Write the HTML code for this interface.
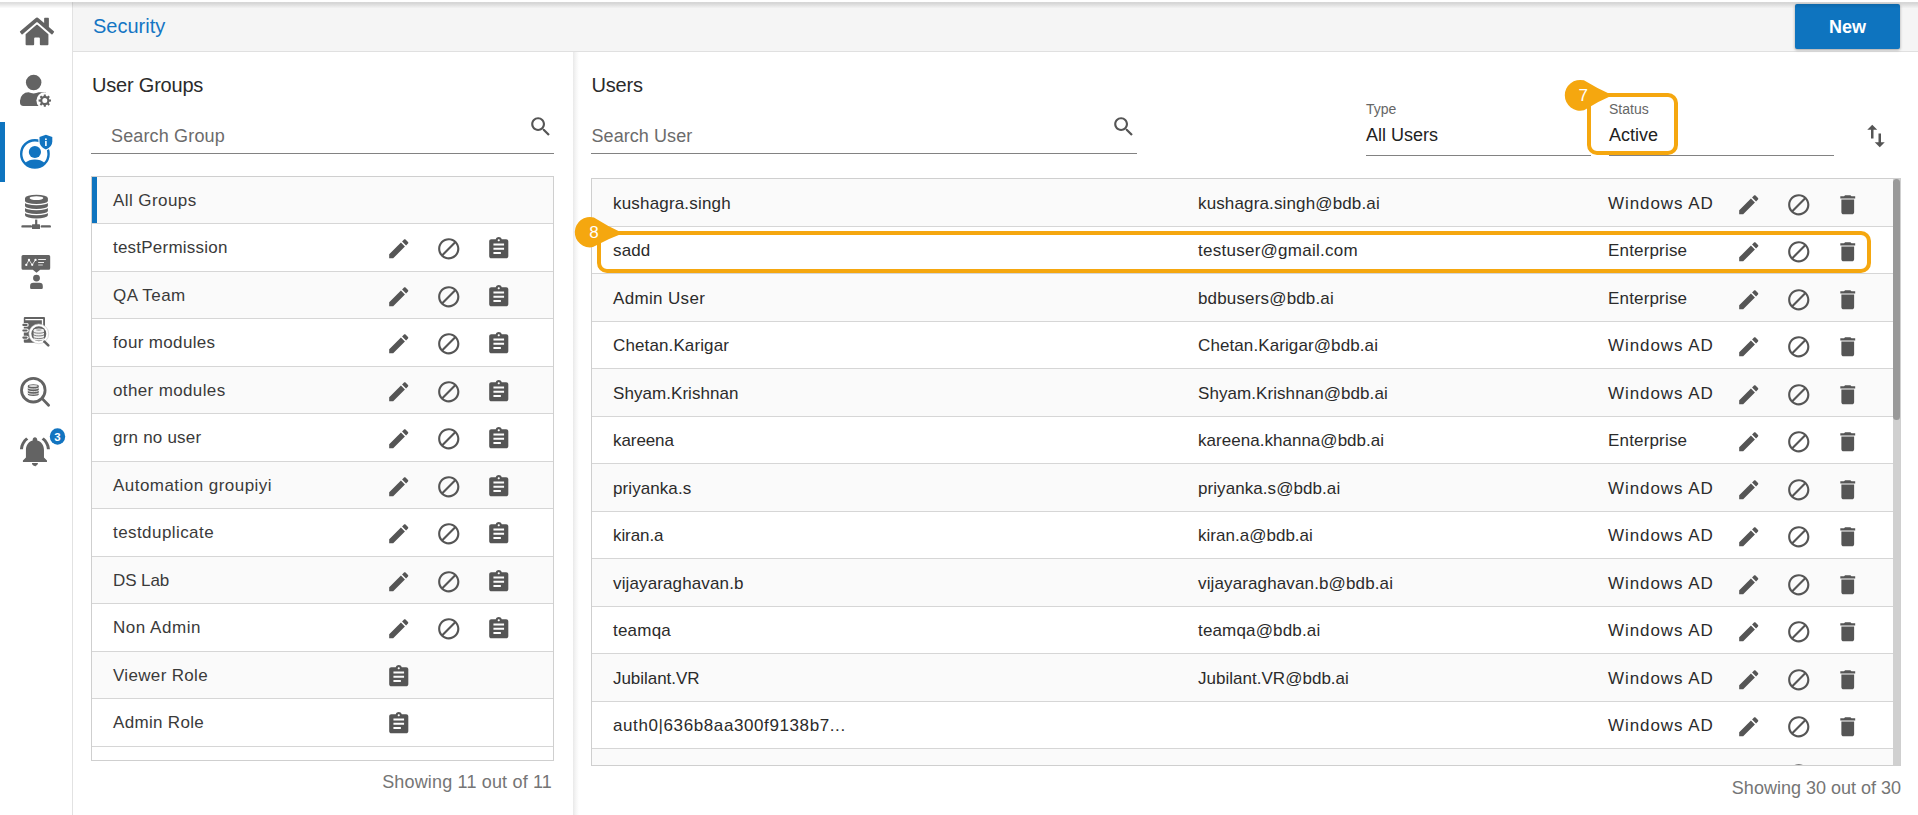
<!DOCTYPE html>
<html lang="en"><head><meta charset="utf-8"><title>Security</title>
<style>
*{box-sizing:border-box}
html,body{margin:0;padding:0;width:1918px;height:815px;overflow:hidden;background:#fff;font-family:"Liberation Sans",sans-serif;color:#212121}
.abs{position:absolute}
#side{position:absolute;left:0;top:0;width:73px;height:815px;background:#fff;border-right:1px solid #e2e2e2}
#bar{position:absolute;left:0;top:122px;width:5px;height:60px;background:#0e74bf}
#head{position:absolute;left:73px;top:0;width:1845px;height:52px;background:#f5f5f5;border-bottom:1px solid #e0e0e0}
#topsh{position:absolute;left:0;top:0;width:1918px;height:9px;background:linear-gradient(#fff 0,#fff 1.6px,rgba(0,0,0,.14) 2.6px,rgba(0,0,0,0) 8.5px)}
#title{position:absolute;left:93px;top:12px;font-size:20px;color:#1475c4;line-height:28px}
#new{position:absolute;left:1795px;top:4px;width:105px;height:45px;background:#0e74bf;border-radius:2px;color:#fff;font-size:18px;font-weight:bold;text-align:center;line-height:47.5px;box-shadow:0 1px 3px rgba(0,0,0,.35)}
#lpanel{position:absolute;left:573px;top:52px;width:6px;height:763px;background:linear-gradient(90deg,#e9e9e9,#f6f6f6 50%,#fff)}
.h2{position:absolute;font-size:20px;line-height:28px;color:#2b2b2b;letter-spacing:-.2px}
.ph{position:absolute;font-size:18px;line-height:24px;color:#6b6b6b}
.ul{position:absolute;height:1px;background:#828282}
.ic{width:25.5px;height:25.5px;fill:#555;display:block}
.list{position:absolute;border:1px solid #cfcfcf;overflow:hidden;background:#fff}
.row{position:absolute;left:0;right:0;border-bottom:1px solid #d6d6d6;font-size:17px;white-space:nowrap}
.row.odd{background:#fafafa}
.row.sel{box-shadow:inset 5px 0 0 #0e74bf}
.row .nm{position:absolute;left:21px;top:var(--dy,0px)}

.gi{position:absolute}
.foot{position:absolute;font-size:18px;color:#757575;line-height:24px;text-align:right}
.em{position:absolute;left:606px;top:var(--dy,0px)}
.ty{position:absolute;left:1016px;top:var(--dy,0px)}
.lbl{position:absolute;font-size:14px;color:#666;line-height:18px}
.val{position:absolute;font-size:18px;color:#222;line-height:24px}
.sw .ic{width:30px;height:30px}
.hl{position:absolute;border:4px solid #f5a70f;border-radius:10px}
</style></head><body>
<div id="head"></div>
<div id="title">Security</div>
<div id="new">New</div>
<div id="lpanel"></div>
<div id="side"><div id="bar"></div><svg id="sideic" width="73" height="815" viewBox="0 0 73 815" style="position:absolute;left:0;top:0"><g transform="translate(19.9,15.73) scale(0.0594,0.0616)" fill="#636363"><path d="M280.37 148.26L96 300.11V464a16 16 0 0 0 16 16l112.06-.29a16 16 0 0 0 15.92-16V368a16 16 0 0 1 16-16h64a16 16 0 0 1 16 16v95.64a16 16 0 0 0 16 16.050L464 480a16 16 0 0 0 16-16V300L295.67 148.26a12.190 12.190 0 0 0-15.300 0zM571.600 251.470L488 182.560V44.050a12 12 0 0 0-12-12h-56a12 12 0 0 0-12 12v72.610L318.470 43a48 48 0 0 0-61 0L4.340 251.470a12 12 0 0 0-1.600 16.900l25.500 31A12 12 0 0 0 45.150 301l235.220-193.740a12.190 12.190 0 0 1 15.300 0L530.900 301a12 12 0 0 0 16.900-1.600l25.500-31a12 12 0 0 0-1.700-16.930z"/></g><circle cx="33.65" cy="82.55" r="7.75" fill="#636363"/><path fill="#636363" d="M20,102.6 V100.8 A8.5,8.5 0 0 1 28.5,92.3 Q33.6,94.6 38.8,92.3 H46 V106 H23.4 A3.4,3.4 0 0 1 20,102.6Z"/><circle cx="44.8" cy="100.6" r="8.4" fill="#fff"/><path fill="#636363" fill-rule="evenodd" d="M49.37,99.50 L51.02,99.61 L51.02,101.59 L49.37,101.70 L48.81,103.06 L49.90,104.30 L48.50,105.70 L47.26,104.61 L45.90,105.17 L45.79,106.82 L43.81,106.82 L43.70,105.17 L42.34,104.61 L41.10,105.70 L39.70,104.30 L40.79,103.06 L40.23,101.70 L38.58,101.59 L38.58,99.61 L40.23,99.50 L40.79,98.14 L39.70,96.90 L41.10,95.50 L42.34,96.59 L43.70,96.03 L43.81,94.38 L45.79,94.38 L45.90,96.03 L47.26,96.59 L48.50,95.50 L49.90,96.90 L48.81,98.14Z M42.30,100.60 a2.5,2.5 0 1 0 5.0,0 a2.5,2.5 0 1 0 -5.0,0Z"/><clipPath id="cpS"><circle cx="34.9" cy="153.9" r="13.7"/></clipPath><ellipse cx="34.9" cy="171.2" rx="14" ry="11.6" fill="#1274c0" clip-path="url(#cpS)"/><circle cx="34.9" cy="153.9" r="13.7" fill="none" stroke="#1274c0" stroke-width="2.4"/><circle cx="34.9" cy="152" r="6.1" fill="#1274c0"/><path d="M45.9,134.7 L52.3,137.1 V141.5 Q52.3,146.6 45.9,149.6 Q39.5,146.6 39.5,141.5 V137.1Z" fill="#1274c0" stroke="#fff" stroke-width="2.2" paint-order="stroke"/><circle cx="45.9" cy="139.2" r="0.95" fill="#fff"/><rect x="45.1" y="141" width="1.6" height="5" fill="#fff"/><path fill="#636363" d="M25.00,198.20 A11.45,3.4 0 0 1 47.90,198.20 V215.20 A11.45,3.4 0 0 1 25.00,215.20Z"/><ellipse cx="36.45" cy="198.10" rx="6.87" ry="1.90" fill="#fff"/><path fill="none" stroke="#fff" stroke-width="1.3" d="M24.50,201.20 A11.95,3.4 0 0 0 48.40,201.20"/><path fill="none" stroke="#fff" stroke-width="1.3" d="M24.50,206.20 A11.95,3.4 0 0 0 48.40,206.20"/><path fill="none" stroke="#fff" stroke-width="1.3" d="M24.50,211.20 A11.95,3.4 0 0 0 48.40,211.20"/><rect x="35.1" y="219.6" width="2.2" height="6" fill="#636363"/><rect x="32" y="224.3" width="8" height="4.7" rx="0.6" fill="#636363"/><path d="M22.5,226.4 H30.9 M41.8,226.4 H49.8" stroke="#636363" stroke-width="2.4" stroke-linecap="round"/><path fill="#636363" d="M23,254.9 H48.700 A1.5,1.5 0 0 1 50.2,256.4 V268.3 A1.5,1.5 0 0 1 48.700,269.8 H40.200 L36.500,272.700 L32.800,269.8 H23 A1.5,1.5 0 0 1 21.500,268.3 V256.4 A1.5,1.5 0 0 1 23,254.9Z"/><path d="M26.300,264.9 L29,260 L32.200,264.8 L35.500,259.9" stroke="#fff" stroke-width="0.8" fill="none"/><circle cx="26.3" cy="264.9" r="1.15" fill="#fff"/><circle cx="29" cy="260" r="1.15" fill="#fff"/><circle cx="32.2" cy="264.8" r="1.15" fill="#fff"/><circle cx="35.5" cy="259.9" r="1.15" fill="#fff"/><path d="M38.200,259.500 H45.900 M38.200,262.500 H44" stroke="#fff" stroke-width="0.9"/><path d="M38.200,265 H42.800" stroke="#bbb" stroke-width="1.3"/><circle cx="36.5" cy="278.1" r="3.45" fill="#636363"/><path fill="#636363" d="M30.100,287.700 V285.900 A3.200,3.200 0 0 1 33.300,282.700 H39.600 A3.200,3.200 0 0 1 42.800,285.900 V287.700 A1.200,1.200 0 0 1 41.600,288.900 H31.300 A1.200,1.200 0 0 1 30.100,287.700Z"/><rect x="23.8" y="317" width="21.2" height="25.700" rx="1" fill="#636363"/><path d="M25.300,319.700 H42.500 V326" stroke="#fff" stroke-width="1.3" fill="none"/><rect x="21.400" y="323.0" width="7.300" height="3.800" rx="1.9" fill="#fff"/><rect x="22.300" y="323.84999999999997" width="5.300" height="2.100" rx="1.05" fill="#636363"/><rect x="21.400" y="328.6" width="7.300" height="3.800" rx="1.9" fill="#fff"/><rect x="22.300" y="329.45" width="5.300" height="2.100" rx="1.05" fill="#636363"/><rect x="21.400" y="335.70000000000005" width="7.300" height="3.800" rx="1.9" fill="#fff"/><rect x="22.300" y="336.55" width="5.300" height="2.100" rx="1.05" fill="#636363"/><circle cx="38.8" cy="333.8" r="9.9" fill="#fff" stroke="#c4c4c4" stroke-width="0.6"/><path d="M44.400,341.600 L48.300,345.400" stroke="#636363" stroke-width="2.6" stroke-linecap="round"/><circle cx="38.8" cy="333.8" r="7.5" fill="#636363"/><path fill="#f0f0f0" d="M33.60,330.20 A5.2,1.6 0 0 1 44.00,330.20 V339.00 A5.2,1.6 0 0 1 33.60,339.00Z"/><path fill="none" stroke="#636363" stroke-width="0.8" d="M33.10,331.60 A5.7,1.6 0 0 0 44.50,331.60"/><path fill="none" stroke="#636363" stroke-width="0.8" d="M33.10,334.30 A5.7,1.6 0 0 0 44.50,334.30"/><path fill="none" stroke="#636363" stroke-width="0.8" d="M33.10,337.00 A5.7,1.6 0 0 0 44.50,337.00"/><ellipse cx="38.8" cy="330.1" rx="3" ry="0.8" fill="#aaa"/><circle cx="33.3" cy="390.2" r="11.800" fill="none" stroke="#636363" stroke-width="2.800"/><path d="M42.200,398.600 L48.600,405.200" stroke="#636363" stroke-width="2.800" stroke-linecap="round"/><path fill="#636363" d="M27.80,386.00 A5.5,1.7 0 0 1 38.80,386.00 V394.30 A5.5,1.7 0 0 1 27.80,394.30Z"/><path fill="none" stroke="#fff" stroke-width="0.8" d="M27.30,387.30 A6.0,1.7 0 0 0 39.30,387.30"/><path fill="none" stroke="#fff" stroke-width="0.8" d="M27.30,389.90 A6.0,1.7 0 0 0 39.30,389.90"/><path fill="none" stroke="#fff" stroke-width="0.8" d="M27.30,392.50 A6.0,1.7 0 0 0 39.30,392.50"/><ellipse cx="33.3" cy="386" rx="4.300" ry="1.100" fill="#d8d8d8"/><g transform="translate(16.9,433.4) scale(1.504)" fill="#636363"><path d="M7.580 4.080L6.150 2.650C3.750 4.480 2.170 7.300 2.030 10.500h2c.15-2.650 1.510-4.970 3.550-6.420zm12.390 6.420h2c-.15-3.200-1.730-6.020-4.120-7.850l-1.420 1.430c2.020 1.450 3.390 3.770 3.540 6.420zM18 11c0-3.070-1.640-5.640-4.500-6.320V4c0-.83-.67-1.500-1.500-1.500s-1.500.67-1.500 1.500v.68C7.630 5.360 6 7.920 6 11v5l-2 2v1h16v-1l-2-2v-5zm-6 11c.14 0 .27-.1.400-.4.650-.14 1.180-.58 1.440-1.180.1-.24.150-.5.150-.78h-4c.01 1.100.9 2 2.010 2z"/></g><ellipse cx="57.5" cy="436.5" rx="7.700" ry="8.300" fill="#1274c0"/><text x="57.5" y="440.500" font-family="Liberation Sans, sans-serif" font-weight="bold" font-size="11.500" fill="#fff" text-anchor="middle">3</text></svg></div>
<div id="topsh"></div>

<div class="h2" style="left:92px;top:71px">User Groups</div>
<div class="ph" style="left:111px;top:124px;letter-spacing:.15px">Search Group</div>
<div class="abs" style="left:527.8px;top:114px"><svg class="ic" viewBox="0 0 24 24"><path d="M15.500 14h-.79l-.28-.27C15.410 12.590 16 11.110 16 9.500 16 5.910 13.090 3 9.500 3S3 5.910 3 9.500 5.910 16 9.500 16c1.610 0 3.090-.59 4.230-1.570l.27.28v.79l5 4.990L20.490 19l-4.990-5zm-6 0C7.010 14 5 11.990 5 9.500S7.010 5 9.500 5 14 7.010 14 9.500 11.990 14 9.500 14z"/></svg></div>
<div class="ul" style="left:91px;top:153px;width:463px"></div>
<div class="list" style="left:91px;top:176px;width:463px;height:585px;color:#3a3a3a">
<div class="row odd sel" style="top:0px;height:47px;line-height:46px;--dy:1px"><span class="nm" style="letter-spacing:0.42px">All Groups</span></div>
<div class="row" style="top:47px;height:48px;line-height:47px"><span class="nm" style="letter-spacing:0.22px">testPermission</span></div><span class="gi" style="left:293.8px;top:59.25px"><svg class="ic" viewBox="0 0 24 24"><path d="M3 17.25V21h3.75L17.81 9.94l-3.75-3.75L3 17.25zM20.71 7.04c.39-.39.39-1.02 0-1.41l-2.34-2.34c-.39-.39-1.02-.39-1.41 0l-1.83 1.83 3.75 3.75 1.83-1.83z"/></svg></span><span class="gi" style="left:343.8px;top:59.25px"><svg class="ic" viewBox="0 0 24 24"><path d="M12 2C6.48 2 2 6.48 2 12s4.48 10 10 10 10-4.480 10-10S17.52 2 12 2zM4 12c0-4.42 3.58-8 8-8 1.850 0 3.550.63 4.900 1.690L5.690 16.900C4.630 15.550 4 13.850 4 12zm8 8c-1.850 0-3.550-.63-4.900-1.690L18.310 7.100C19.370 8.450 20 10.150 20 12c0 4.420-3.580 8-8 8z"/></svg></span><span class="gi" style="left:393.8px;top:59.25px"><svg class="ic" viewBox="0 0 24 24"><path d="M19 3h-4.180C14.400 1.840 13.300 1 12 1c-1.300 0-2.400.84-2.820 2H5c-1.100 0-2 .9-2 2v14c0 1.100.9 2 2 2h14c1.100 0 2-.9 2-2V5c0-1.100-.9-2-2-2zm-7 0c.55 0 1 .45 1 1s-.45 1-1 1-1-.45-1-1 .45-1 1-1zm2 14H7v-2h7v2zm3-4H7v-2h10v2zm0-4H7V7h10v2z"/></svg></span>
<div class="row odd" style="top:95px;height:47px;line-height:46px;--dy:1px"><span class="nm" style="letter-spacing:0.43px">QA Team</span></div><span class="gi" style="left:293.8px;top:106.75px"><svg class="ic" viewBox="0 0 24 24"><path d="M3 17.25V21h3.75L17.81 9.94l-3.75-3.75L3 17.25zM20.71 7.04c.39-.39.39-1.02 0-1.41l-2.34-2.34c-.39-.39-1.02-.39-1.41 0l-1.83 1.83 3.75 3.75 1.83-1.83z"/></svg></span><span class="gi" style="left:343.8px;top:106.75px"><svg class="ic" viewBox="0 0 24 24"><path d="M12 2C6.48 2 2 6.48 2 12s4.48 10 10 10 10-4.480 10-10S17.52 2 12 2zM4 12c0-4.42 3.58-8 8-8 1.850 0 3.550.63 4.900 1.690L5.690 16.900C4.630 15.550 4 13.850 4 12zm8 8c-1.850 0-3.550-.63-4.900-1.690L18.310 7.100C19.370 8.450 20 10.150 20 12c0 4.420-3.580 8-8 8z"/></svg></span><span class="gi" style="left:393.8px;top:106.75px"><svg class="ic" viewBox="0 0 24 24"><path d="M19 3h-4.180C14.400 1.840 13.300 1 12 1c-1.300 0-2.400.84-2.820 2H5c-1.100 0-2 .9-2 2v14c0 1.100.9 2 2 2h14c1.100 0 2-.9 2-2V5c0-1.100-.9-2-2-2zm-7 0c.55 0 1 .45 1 1s-.45 1-1 1-1-.45-1-1 .45-1 1-1zm2 14H7v-2h7v2zm3-4H7v-2h10v2zm0-4H7V7h10v2z"/></svg></span>
<div class="row" style="top:142px;height:48px;line-height:47px"><span class="nm" style="letter-spacing:0.35px">four modules</span></div><span class="gi" style="left:293.8px;top:154.25px"><svg class="ic" viewBox="0 0 24 24"><path d="M3 17.25V21h3.75L17.81 9.94l-3.75-3.75L3 17.25zM20.71 7.04c.39-.39.39-1.02 0-1.41l-2.34-2.34c-.39-.39-1.02-.39-1.41 0l-1.83 1.83 3.75 3.75 1.83-1.83z"/></svg></span><span class="gi" style="left:343.8px;top:154.25px"><svg class="ic" viewBox="0 0 24 24"><path d="M12 2C6.48 2 2 6.48 2 12s4.48 10 10 10 10-4.480 10-10S17.52 2 12 2zM4 12c0-4.42 3.58-8 8-8 1.850 0 3.550.63 4.900 1.690L5.690 16.900C4.630 15.550 4 13.850 4 12zm8 8c-1.850 0-3.550-.63-4.900-1.690L18.310 7.100C19.370 8.450 20 10.150 20 12c0 4.420-3.580 8-8 8z"/></svg></span><span class="gi" style="left:393.8px;top:154.25px"><svg class="ic" viewBox="0 0 24 24"><path d="M19 3h-4.180C14.400 1.840 13.300 1 12 1c-1.300 0-2.400.84-2.820 2H5c-1.100 0-2 .9-2 2v14c0 1.100.9 2 2 2h14c1.100 0 2-.9 2-2V5c0-1.100-.9-2-2-2zm-7 0c.55 0 1 .45 1 1s-.45 1-1 1-1-.45-1-1 .45-1 1-1zm2 14H7v-2h7v2zm3-4H7v-2h10v2zm0-4H7V7h10v2z"/></svg></span>
<div class="row odd" style="top:190px;height:47px;line-height:46px;--dy:1px"><span class="nm" style="letter-spacing:0.37px">other modules</span></div><span class="gi" style="left:293.8px;top:201.75px"><svg class="ic" viewBox="0 0 24 24"><path d="M3 17.25V21h3.75L17.81 9.94l-3.75-3.75L3 17.25zM20.71 7.04c.39-.39.39-1.02 0-1.41l-2.34-2.34c-.39-.39-1.02-.39-1.41 0l-1.83 1.83 3.75 3.75 1.83-1.83z"/></svg></span><span class="gi" style="left:343.8px;top:201.75px"><svg class="ic" viewBox="0 0 24 24"><path d="M12 2C6.48 2 2 6.48 2 12s4.48 10 10 10 10-4.480 10-10S17.52 2 12 2zM4 12c0-4.42 3.58-8 8-8 1.850 0 3.550.63 4.900 1.690L5.690 16.900C4.630 15.550 4 13.850 4 12zm8 8c-1.850 0-3.550-.63-4.900-1.690L18.310 7.100C19.370 8.450 20 10.150 20 12c0 4.420-3.580 8-8 8z"/></svg></span><span class="gi" style="left:393.8px;top:201.75px"><svg class="ic" viewBox="0 0 24 24"><path d="M19 3h-4.180C14.400 1.840 13.300 1 12 1c-1.300 0-2.400.84-2.820 2H5c-1.100 0-2 .9-2 2v14c0 1.100.9 2 2 2h14c1.100 0 2-.9 2-2V5c0-1.100-.9-2-2-2zm-7 0c.55 0 1 .45 1 1s-.45 1-1 1-1-.45-1-1 .45-1 1-1zm2 14H7v-2h7v2zm3-4H7v-2h10v2zm0-4H7V7h10v2z"/></svg></span>
<div class="row" style="top:237px;height:48px;line-height:47px"><span class="nm" style="letter-spacing:0.21px">grn no user</span></div><span class="gi" style="left:293.8px;top:249.25px"><svg class="ic" viewBox="0 0 24 24"><path d="M3 17.25V21h3.75L17.81 9.94l-3.75-3.75L3 17.25zM20.71 7.04c.39-.39.39-1.02 0-1.41l-2.34-2.34c-.39-.39-1.02-.39-1.41 0l-1.83 1.83 3.75 3.75 1.83-1.83z"/></svg></span><span class="gi" style="left:343.8px;top:249.25px"><svg class="ic" viewBox="0 0 24 24"><path d="M12 2C6.48 2 2 6.48 2 12s4.48 10 10 10 10-4.480 10-10S17.52 2 12 2zM4 12c0-4.42 3.58-8 8-8 1.850 0 3.550.63 4.900 1.690L5.690 16.900C4.630 15.550 4 13.850 4 12zm8 8c-1.850 0-3.550-.63-4.900-1.690L18.310 7.100C19.370 8.450 20 10.150 20 12c0 4.420-3.580 8-8 8z"/></svg></span><span class="gi" style="left:393.8px;top:249.25px"><svg class="ic" viewBox="0 0 24 24"><path d="M19 3h-4.180C14.400 1.840 13.300 1 12 1c-1.300 0-2.400.84-2.820 2H5c-1.100 0-2 .9-2 2v14c0 1.100.9 2 2 2h14c1.100 0 2-.9 2-2V5c0-1.100-.9-2-2-2zm-7 0c.55 0 1 .45 1 1s-.45 1-1 1-1-.45-1-1 .45-1 1-1zm2 14H7v-2h7v2zm3-4H7v-2h10v2zm0-4H7V7h10v2z"/></svg></span>
<div class="row odd" style="top:285px;height:47px;line-height:46px;--dy:1px"><span class="nm" style="letter-spacing:0.46px">Automation groupiyi</span></div><span class="gi" style="left:293.8px;top:296.75px"><svg class="ic" viewBox="0 0 24 24"><path d="M3 17.25V21h3.75L17.81 9.94l-3.75-3.75L3 17.25zM20.71 7.04c.39-.39.39-1.02 0-1.41l-2.34-2.34c-.39-.39-1.02-.39-1.41 0l-1.83 1.83 3.75 3.75 1.83-1.83z"/></svg></span><span class="gi" style="left:343.8px;top:296.75px"><svg class="ic" viewBox="0 0 24 24"><path d="M12 2C6.48 2 2 6.48 2 12s4.48 10 10 10 10-4.480 10-10S17.52 2 12 2zM4 12c0-4.42 3.58-8 8-8 1.850 0 3.550.63 4.900 1.690L5.690 16.900C4.630 15.550 4 13.850 4 12zm8 8c-1.850 0-3.550-.63-4.900-1.690L18.310 7.100C19.370 8.450 20 10.150 20 12c0 4.420-3.580 8-8 8z"/></svg></span><span class="gi" style="left:393.8px;top:296.75px"><svg class="ic" viewBox="0 0 24 24"><path d="M19 3h-4.180C14.400 1.840 13.300 1 12 1c-1.300 0-2.400.84-2.820 2H5c-1.100 0-2 .9-2 2v14c0 1.100.9 2 2 2h14c1.100 0 2-.9 2-2V5c0-1.100-.9-2-2-2zm-7 0c.55 0 1 .45 1 1s-.45 1-1 1-1-.45-1-1 .45-1 1-1zm2 14H7v-2h7v2zm3-4H7v-2h10v2zm0-4H7V7h10v2z"/></svg></span>
<div class="row" style="top:332px;height:48px;line-height:47px"><span class="nm" style="letter-spacing:0.43px">testduplicate</span></div><span class="gi" style="left:293.8px;top:344.25px"><svg class="ic" viewBox="0 0 24 24"><path d="M3 17.25V21h3.75L17.81 9.94l-3.75-3.75L3 17.25zM20.71 7.04c.39-.39.39-1.02 0-1.41l-2.34-2.34c-.39-.39-1.02-.39-1.41 0l-1.83 1.83 3.75 3.75 1.83-1.83z"/></svg></span><span class="gi" style="left:343.8px;top:344.25px"><svg class="ic" viewBox="0 0 24 24"><path d="M12 2C6.48 2 2 6.48 2 12s4.48 10 10 10 10-4.480 10-10S17.52 2 12 2zM4 12c0-4.42 3.58-8 8-8 1.850 0 3.550.63 4.900 1.690L5.690 16.900C4.630 15.550 4 13.850 4 12zm8 8c-1.850 0-3.550-.63-4.900-1.690L18.310 7.100C19.370 8.450 20 10.150 20 12c0 4.420-3.580 8-8 8z"/></svg></span><span class="gi" style="left:393.8px;top:344.25px"><svg class="ic" viewBox="0 0 24 24"><path d="M19 3h-4.180C14.400 1.840 13.300 1 12 1c-1.300 0-2.400.84-2.820 2H5c-1.100 0-2 .9-2 2v14c0 1.100.9 2 2 2h14c1.100 0 2-.9 2-2V5c0-1.100-.9-2-2-2zm-7 0c.55 0 1 .45 1 1s-.45 1-1 1-1-.45-1-1 .45-1 1-1zm2 14H7v-2h7v2zm3-4H7v-2h10v2zm0-4H7V7h10v2z"/></svg></span>
<div class="row odd" style="top:380px;height:47px;line-height:46px;--dy:1px"><span class="nm" style="letter-spacing:-0.08px">DS Lab</span></div><span class="gi" style="left:293.8px;top:391.75px"><svg class="ic" viewBox="0 0 24 24"><path d="M3 17.25V21h3.75L17.81 9.94l-3.75-3.75L3 17.25zM20.71 7.04c.39-.39.39-1.02 0-1.41l-2.34-2.34c-.39-.39-1.02-.39-1.41 0l-1.83 1.83 3.75 3.75 1.83-1.83z"/></svg></span><span class="gi" style="left:343.8px;top:391.75px"><svg class="ic" viewBox="0 0 24 24"><path d="M12 2C6.48 2 2 6.48 2 12s4.48 10 10 10 10-4.480 10-10S17.52 2 12 2zM4 12c0-4.42 3.58-8 8-8 1.850 0 3.550.63 4.900 1.690L5.690 16.900C4.630 15.550 4 13.850 4 12zm8 8c-1.850 0-3.550-.63-4.900-1.690L18.310 7.100C19.370 8.450 20 10.150 20 12c0 4.420-3.580 8-8 8z"/></svg></span><span class="gi" style="left:393.8px;top:391.75px"><svg class="ic" viewBox="0 0 24 24"><path d="M19 3h-4.180C14.400 1.840 13.300 1 12 1c-1.300 0-2.400.84-2.820 2H5c-1.100 0-2 .9-2 2v14c0 1.100.9 2 2 2h14c1.100 0 2-.9 2-2V5c0-1.100-.9-2-2-2zm-7 0c.55 0 1 .45 1 1s-.45 1-1 1-1-.45-1-1 .45-1 1-1zm2 14H7v-2h7v2zm3-4H7v-2h10v2zm0-4H7V7h10v2z"/></svg></span>
<div class="row" style="top:427px;height:48px;line-height:47px"><span class="nm" style="letter-spacing:0.53px">Non Admin</span></div><span class="gi" style="left:293.8px;top:439.25px"><svg class="ic" viewBox="0 0 24 24"><path d="M3 17.25V21h3.75L17.81 9.94l-3.75-3.75L3 17.25zM20.71 7.04c.39-.39.39-1.02 0-1.41l-2.34-2.34c-.39-.39-1.02-.39-1.41 0l-1.83 1.83 3.75 3.75 1.83-1.83z"/></svg></span><span class="gi" style="left:343.8px;top:439.25px"><svg class="ic" viewBox="0 0 24 24"><path d="M12 2C6.48 2 2 6.48 2 12s4.48 10 10 10 10-4.480 10-10S17.52 2 12 2zM4 12c0-4.42 3.58-8 8-8 1.850 0 3.550.63 4.900 1.690L5.690 16.900C4.630 15.550 4 13.850 4 12zm8 8c-1.850 0-3.550-.63-4.900-1.690L18.310 7.100C19.370 8.450 20 10.150 20 12c0 4.420-3.580 8-8 8z"/></svg></span><span class="gi" style="left:393.8px;top:439.25px"><svg class="ic" viewBox="0 0 24 24"><path d="M19 3h-4.180C14.400 1.840 13.300 1 12 1c-1.300 0-2.400.84-2.820 2H5c-1.100 0-2 .9-2 2v14c0 1.100.9 2 2 2h14c1.100 0 2-.9 2-2V5c0-1.100-.9-2-2-2zm-7 0c.55 0 1 .45 1 1s-.45 1-1 1-1-.45-1-1 .45-1 1-1zm2 14H7v-2h7v2zm3-4H7v-2h10v2zm0-4H7V7h10v2z"/></svg></span>
<div class="row odd" style="top:475px;height:47px;line-height:46px;--dy:1px"><span class="nm" style="letter-spacing:0.33px">Viewer Role</span></div><span class="gi" style="left:293.8px;top:486.75px"><svg class="ic" viewBox="0 0 24 24"><path d="M19 3h-4.180C14.400 1.840 13.300 1 12 1c-1.300 0-2.400.84-2.820 2H5c-1.100 0-2 .9-2 2v14c0 1.100.9 2 2 2h14c1.100 0 2-.9 2-2V5c0-1.100-.9-2-2-2zm-7 0c.55 0 1 .45 1 1s-.45 1-1 1-1-.45-1-1 .45-1 1-1zm2 14H7v-2h7v2zm3-4H7v-2h10v2zm0-4H7V7h10v2z"/></svg></span>
<div class="row" style="top:522px;height:48px;line-height:47px"><span class="nm" style="letter-spacing:0.32px">Admin Role</span></div><span class="gi" style="left:293.8px;top:534.25px"><svg class="ic" viewBox="0 0 24 24"><path d="M19 3h-4.180C14.400 1.840 13.300 1 12 1c-1.300 0-2.400.84-2.820 2H5c-1.100 0-2 .9-2 2v14c0 1.100.9 2 2 2h14c1.100 0 2-.9 2-2V5c0-1.100-.9-2-2-2zm-7 0c.55 0 1 .45 1 1s-.45 1-1 1-1-.45-1-1 .45-1 1-1zm2 14H7v-2h7v2zm3-4H7v-2h10v2zm0-4H7V7h10v2z"/></svg></span>
<div class="row" style="top:570px;height:47px;line-height:46px;--dy:1px"><span class="nm"></span></div>
</div>
<div class="foot" style="left:300px;top:770px;width:252px;letter-spacing:.17px">Showing 11 out of 11</div>

<div class="h2" style="left:591.5px;top:71px">Users</div>
<div class="ph" style="left:591.5px;top:124px;letter-spacing:.07px">Search User</div>
<div class="abs" style="left:1111px;top:114px"><svg class="ic" viewBox="0 0 24 24"><path d="M15.500 14h-.79l-.28-.27C15.410 12.590 16 11.110 16 9.500 16 5.910 13.090 3 9.500 3S3 5.910 3 9.500 5.910 16 9.500 16c1.610 0 3.090-.59 4.230-1.570l.27.28v.79l5 4.990L20.490 19l-4.990-5zm-6 0C7.010 14 5 11.990 5 9.500S7.010 5 9.500 5 14 7.010 14 9.500 11.990 14 9.500 14z"/></svg></div>
<div class="ul" style="left:591px;top:153px;width:546px"></div>
<div class="lbl" style="left:1366px;top:100px">Type</div>
<div class="val" style="left:1366px;top:123px">All Users</div>
<div class="ul" style="left:1366px;top:155px;width:225px"></div>
<div class="lbl" style="left:1609px;top:100px">Status</div>
<div class="val" style="left:1609px;top:123px">Active</div>
<div class="ul" style="left:1609px;top:155px;width:225px"></div>
<div class="abs" style="left:1861.3px;top:120.5px"><span class="sw"><svg class="ic" viewBox="0 0 24 24"><path d="M16 17.010V10h-2v7.010h-3L15 21l4-3.990h-3zM9 3L5 6.990h3V14h2V6.990h3L9 3z"/></svg></span></div>
<div class="list" style="left:591px;top:178px;width:1310px;height:588px;color:#2b2b2b">
<div class="row odd" style="top:0px;height:48px;line-height:47px;--dy:1px"><span class="nm" style="letter-spacing:0.18px">kushagra.singh</span><span class="em" style="letter-spacing:0.14px">kushagra.singh@bdb.ai</span><span class="ty" style="letter-spacing:0.93px">Windows AD</span></div><span class="gi" style="left:1143.7px;top:12.5px"><svg class="ic" viewBox="0 0 24 24"><path d="M3 17.25V21h3.75L17.81 9.94l-3.75-3.75L3 17.25zM20.71 7.04c.39-.39.39-1.02 0-1.41l-2.34-2.34c-.39-.39-1.02-.39-1.41 0l-1.83 1.83 3.75 3.75 1.83-1.83z"/></svg></span><span class="gi" style="left:1193.9px;top:12.5px"><svg class="ic" viewBox="0 0 24 24"><path d="M12 2C6.48 2 2 6.48 2 12s4.48 10 10 10 10-4.480 10-10S17.52 2 12 2zM4 12c0-4.42 3.58-8 8-8 1.850 0 3.550.63 4.900 1.690L5.690 16.900C4.630 15.550 4 13.850 4 12zm8 8c-1.850 0-3.550-.63-4.900-1.690L18.310 7.100C19.370 8.450 20 10.150 20 12c0 4.420-3.580 8-8 8z"/></svg></span><span class="gi" style="left:1243.4px;top:12.5px"><svg class="ic" viewBox="0 0 24 24"><path d="M6 19c0 1.100.9 2 2 2h8c1.100 0 2-.9 2-2V7H6v12zM19 4h-3.500l-1-1h-5l-1 1H5v2h14V4z"/></svg></span>
<div class="row" style="top:48px;height:47px;line-height:46px;--dy:1px"><span class="nm" style="letter-spacing:0.13px">sadd</span><span class="em" style="letter-spacing:0.26px">testuser@gmail.com</span><span class="ty" style="letter-spacing:0.17px">Enterprise</span></div><span class="gi" style="left:1143.7px;top:60.0px"><svg class="ic" viewBox="0 0 24 24"><path d="M3 17.25V21h3.75L17.81 9.94l-3.75-3.75L3 17.25zM20.71 7.04c.39-.39.39-1.02 0-1.41l-2.34-2.34c-.39-.39-1.02-.39-1.41 0l-1.83 1.83 3.75 3.75 1.83-1.83z"/></svg></span><span class="gi" style="left:1193.9px;top:60.0px"><svg class="ic" viewBox="0 0 24 24"><path d="M12 2C6.48 2 2 6.48 2 12s4.48 10 10 10 10-4.480 10-10S17.52 2 12 2zM4 12c0-4.42 3.58-8 8-8 1.850 0 3.550.63 4.900 1.690L5.690 16.900C4.630 15.550 4 13.850 4 12zm8 8c-1.850 0-3.550-.63-4.900-1.690L18.310 7.100C19.370 8.450 20 10.150 20 12c0 4.420-3.580 8-8 8z"/></svg></span><span class="gi" style="left:1243.4px;top:60.0px"><svg class="ic" viewBox="0 0 24 24"><path d="M6 19c0 1.100.9 2 2 2h8c1.100 0 2-.9 2-2V7H6v12zM19 4h-3.500l-1-1h-5l-1 1H5v2h14V4z"/></svg></span>
<div class="row odd" style="top:95px;height:48px;line-height:47px;--dy:1px"><span class="nm" style="letter-spacing:0.34px">Admin User</span><span class="em" style="letter-spacing:0.16px">bdbusers@bdb.ai</span><span class="ty" style="letter-spacing:0.17px">Enterprise</span></div><span class="gi" style="left:1143.7px;top:107.5px"><svg class="ic" viewBox="0 0 24 24"><path d="M3 17.25V21h3.75L17.81 9.94l-3.75-3.75L3 17.25zM20.71 7.04c.39-.39.39-1.02 0-1.41l-2.34-2.34c-.39-.39-1.02-.39-1.41 0l-1.83 1.83 3.75 3.75 1.83-1.83z"/></svg></span><span class="gi" style="left:1193.9px;top:107.5px"><svg class="ic" viewBox="0 0 24 24"><path d="M12 2C6.48 2 2 6.48 2 12s4.48 10 10 10 10-4.480 10-10S17.52 2 12 2zM4 12c0-4.42 3.58-8 8-8 1.850 0 3.550.63 4.900 1.690L5.690 16.900C4.630 15.550 4 13.850 4 12zm8 8c-1.850 0-3.550-.63-4.900-1.690L18.310 7.100C19.370 8.450 20 10.150 20 12c0 4.420-3.580 8-8 8z"/></svg></span><span class="gi" style="left:1243.4px;top:107.5px"><svg class="ic" viewBox="0 0 24 24"><path d="M6 19c0 1.100.9 2 2 2h8c1.100 0 2-.9 2-2V7H6v12zM19 4h-3.500l-1-1h-5l-1 1H5v2h14V4z"/></svg></span>
<div class="row" style="top:143px;height:47px;line-height:46px;--dy:1px"><span class="nm" style="letter-spacing:0.12px">Chetan.Karigar</span><span class="em" style="letter-spacing:0.10px">Chetan.Karigar@bdb.ai</span><span class="ty" style="letter-spacing:0.93px">Windows AD</span></div><span class="gi" style="left:1143.7px;top:155.0px"><svg class="ic" viewBox="0 0 24 24"><path d="M3 17.25V21h3.75L17.81 9.94l-3.75-3.75L3 17.25zM20.71 7.04c.39-.39.39-1.02 0-1.41l-2.34-2.34c-.39-.39-1.02-.39-1.41 0l-1.83 1.83 3.75 3.75 1.83-1.83z"/></svg></span><span class="gi" style="left:1193.9px;top:155.0px"><svg class="ic" viewBox="0 0 24 24"><path d="M12 2C6.48 2 2 6.48 2 12s4.48 10 10 10 10-4.480 10-10S17.52 2 12 2zM4 12c0-4.42 3.58-8 8-8 1.850 0 3.550.63 4.900 1.690L5.690 16.900C4.630 15.550 4 13.850 4 12zm8 8c-1.850 0-3.550-.63-4.900-1.690L18.310 7.100C19.370 8.450 20 10.150 20 12c0 4.420-3.580 8-8 8z"/></svg></span><span class="gi" style="left:1243.4px;top:155.0px"><svg class="ic" viewBox="0 0 24 24"><path d="M6 19c0 1.100.9 2 2 2h8c1.100 0 2-.9 2-2V7H6v12zM19 4h-3.500l-1-1h-5l-1 1H5v2h14V4z"/></svg></span>
<div class="row odd" style="top:190px;height:48px;line-height:47px;--dy:1px"><span class="nm" style="letter-spacing:0.06px">Shyam.Krishnan</span><span class="em" style="letter-spacing:0.07px">Shyam.Krishnan@bdb.ai</span><span class="ty" style="letter-spacing:0.93px">Windows AD</span></div><span class="gi" style="left:1143.7px;top:202.5px"><svg class="ic" viewBox="0 0 24 24"><path d="M3 17.25V21h3.75L17.81 9.94l-3.75-3.75L3 17.25zM20.71 7.04c.39-.39.39-1.02 0-1.41l-2.34-2.34c-.39-.39-1.02-.39-1.41 0l-1.83 1.83 3.75 3.75 1.83-1.83z"/></svg></span><span class="gi" style="left:1193.9px;top:202.5px"><svg class="ic" viewBox="0 0 24 24"><path d="M12 2C6.48 2 2 6.48 2 12s4.48 10 10 10 10-4.480 10-10S17.52 2 12 2zM4 12c0-4.42 3.58-8 8-8 1.850 0 3.550.63 4.900 1.690L5.690 16.900C4.630 15.550 4 13.850 4 12zm8 8c-1.850 0-3.550-.63-4.900-1.690L18.310 7.100C19.370 8.450 20 10.150 20 12c0 4.420-3.580 8-8 8z"/></svg></span><span class="gi" style="left:1243.4px;top:202.5px"><svg class="ic" viewBox="0 0 24 24"><path d="M6 19c0 1.100.9 2 2 2h8c1.100 0 2-.9 2-2V7H6v12zM19 4h-3.500l-1-1h-5l-1 1H5v2h14V4z"/></svg></span>
<div class="row" style="top:238px;height:47px;line-height:46px;--dy:1px"><span class="nm" style="letter-spacing:-0.08px">kareena</span><span class="em" style="letter-spacing:0.03px">kareena.khanna@bdb.ai</span><span class="ty" style="letter-spacing:0.17px">Enterprise</span></div><span class="gi" style="left:1143.7px;top:250.0px"><svg class="ic" viewBox="0 0 24 24"><path d="M3 17.25V21h3.75L17.81 9.94l-3.75-3.75L3 17.25zM20.71 7.04c.39-.39.39-1.02 0-1.41l-2.34-2.34c-.39-.39-1.02-.39-1.41 0l-1.83 1.83 3.75 3.75 1.83-1.83z"/></svg></span><span class="gi" style="left:1193.9px;top:250.0px"><svg class="ic" viewBox="0 0 24 24"><path d="M12 2C6.48 2 2 6.48 2 12s4.48 10 10 10 10-4.480 10-10S17.52 2 12 2zM4 12c0-4.42 3.58-8 8-8 1.850 0 3.550.63 4.900 1.690L5.690 16.900C4.630 15.550 4 13.850 4 12zm8 8c-1.850 0-3.550-.63-4.900-1.690L18.310 7.100C19.370 8.450 20 10.150 20 12c0 4.420-3.580 8-8 8z"/></svg></span><span class="gi" style="left:1243.4px;top:250.0px"><svg class="ic" viewBox="0 0 24 24"><path d="M6 19c0 1.100.9 2 2 2h8c1.100 0 2-.9 2-2V7H6v12zM19 4h-3.500l-1-1h-5l-1 1H5v2h14V4z"/></svg></span>
<div class="row odd" style="top:285px;height:48px;line-height:47px;--dy:1px"><span class="nm" style="letter-spacing:0.08px">priyanka.s</span><span class="em" style="letter-spacing:0.07px">priyanka.s@bdb.ai</span><span class="ty" style="letter-spacing:0.93px">Windows AD</span></div><span class="gi" style="left:1143.7px;top:297.5px"><svg class="ic" viewBox="0 0 24 24"><path d="M3 17.25V21h3.75L17.81 9.94l-3.75-3.75L3 17.25zM20.71 7.04c.39-.39.39-1.02 0-1.41l-2.34-2.34c-.39-.39-1.02-.39-1.41 0l-1.83 1.83 3.75 3.75 1.83-1.83z"/></svg></span><span class="gi" style="left:1193.9px;top:297.5px"><svg class="ic" viewBox="0 0 24 24"><path d="M12 2C6.48 2 2 6.48 2 12s4.48 10 10 10 10-4.480 10-10S17.52 2 12 2zM4 12c0-4.42 3.58-8 8-8 1.850 0 3.550.63 4.900 1.690L5.690 16.900C4.630 15.550 4 13.850 4 12zm8 8c-1.850 0-3.550-.63-4.900-1.690L18.310 7.100C19.370 8.450 20 10.150 20 12c0 4.420-3.580 8-8 8z"/></svg></span><span class="gi" style="left:1243.4px;top:297.5px"><svg class="ic" viewBox="0 0 24 24"><path d="M6 19c0 1.100.9 2 2 2h8c1.100 0 2-.9 2-2V7H6v12zM19 4h-3.500l-1-1h-5l-1 1H5v2h14V4z"/></svg></span>
<div class="row" style="top:333px;height:47px;line-height:46px;--dy:1px"><span class="nm" style="letter-spacing:-0.08px">kiran.a</span><span class="em" style="letter-spacing:0.02px">kiran.a@bdb.ai</span><span class="ty" style="letter-spacing:0.93px">Windows AD</span></div><span class="gi" style="left:1143.7px;top:345.0px"><svg class="ic" viewBox="0 0 24 24"><path d="M3 17.25V21h3.75L17.81 9.94l-3.75-3.75L3 17.25zM20.71 7.04c.39-.39.39-1.02 0-1.41l-2.34-2.34c-.39-.39-1.02-.39-1.41 0l-1.83 1.83 3.75 3.75 1.83-1.83z"/></svg></span><span class="gi" style="left:1193.9px;top:345.0px"><svg class="ic" viewBox="0 0 24 24"><path d="M12 2C6.48 2 2 6.48 2 12s4.48 10 10 10 10-4.480 10-10S17.52 2 12 2zM4 12c0-4.42 3.58-8 8-8 1.850 0 3.550.63 4.900 1.690L5.690 16.900C4.630 15.550 4 13.850 4 12zm8 8c-1.850 0-3.550-.63-4.900-1.690L18.310 7.100C19.370 8.450 20 10.150 20 12c0 4.420-3.580 8-8 8z"/></svg></span><span class="gi" style="left:1243.4px;top:345.0px"><svg class="ic" viewBox="0 0 24 24"><path d="M6 19c0 1.100.9 2 2 2h8c1.100 0 2-.9 2-2V7H6v12zM19 4h-3.500l-1-1h-5l-1 1H5v2h14V4z"/></svg></span>
<div class="row odd" style="top:380px;height:48px;line-height:47px;--dy:1px"><span class="nm" style="letter-spacing:0.13px">vijayaraghavan.b</span><span class="em" style="letter-spacing:0.13px">vijayaraghavan.b@bdb.ai</span><span class="ty" style="letter-spacing:0.93px">Windows AD</span></div><span class="gi" style="left:1143.7px;top:392.5px"><svg class="ic" viewBox="0 0 24 24"><path d="M3 17.25V21h3.75L17.81 9.94l-3.75-3.75L3 17.25zM20.71 7.04c.39-.39.39-1.02 0-1.41l-2.34-2.34c-.39-.39-1.02-.39-1.41 0l-1.83 1.83 3.75 3.75 1.83-1.83z"/></svg></span><span class="gi" style="left:1193.9px;top:392.5px"><svg class="ic" viewBox="0 0 24 24"><path d="M12 2C6.48 2 2 6.48 2 12s4.48 10 10 10 10-4.480 10-10S17.52 2 12 2zM4 12c0-4.42 3.58-8 8-8 1.850 0 3.550.63 4.900 1.690L5.690 16.900C4.630 15.550 4 13.850 4 12zm8 8c-1.850 0-3.550-.63-4.900-1.690L18.310 7.100C19.370 8.450 20 10.150 20 12c0 4.420-3.580 8-8 8z"/></svg></span><span class="gi" style="left:1243.4px;top:392.5px"><svg class="ic" viewBox="0 0 24 24"><path d="M6 19c0 1.100.9 2 2 2h8c1.100 0 2-.9 2-2V7H6v12zM19 4h-3.500l-1-1h-5l-1 1H5v2h14V4z"/></svg></span>
<div class="row" style="top:428px;height:47px;line-height:46px;--dy:1px"><span class="nm" style="letter-spacing:0.22px">teamqa</span><span class="em" style="letter-spacing:0.16px">teamqa@bdb.ai</span><span class="ty" style="letter-spacing:0.93px">Windows AD</span></div><span class="gi" style="left:1143.7px;top:440.0px"><svg class="ic" viewBox="0 0 24 24"><path d="M3 17.25V21h3.75L17.81 9.94l-3.75-3.75L3 17.25zM20.71 7.04c.39-.39.39-1.02 0-1.41l-2.34-2.34c-.39-.39-1.02-.39-1.41 0l-1.83 1.83 3.75 3.75 1.83-1.83z"/></svg></span><span class="gi" style="left:1193.9px;top:440.0px"><svg class="ic" viewBox="0 0 24 24"><path d="M12 2C6.48 2 2 6.48 2 12s4.48 10 10 10 10-4.480 10-10S17.52 2 12 2zM4 12c0-4.42 3.58-8 8-8 1.850 0 3.550.63 4.900 1.690L5.690 16.900C4.630 15.550 4 13.850 4 12zm8 8c-1.850 0-3.550-.63-4.900-1.690L18.310 7.100C19.370 8.450 20 10.150 20 12c0 4.420-3.580 8-8 8z"/></svg></span><span class="gi" style="left:1243.4px;top:440.0px"><svg class="ic" viewBox="0 0 24 24"><path d="M6 19c0 1.100.9 2 2 2h8c1.100 0 2-.9 2-2V7H6v12zM19 4h-3.500l-1-1h-5l-1 1H5v2h14V4z"/></svg></span>
<div class="row odd" style="top:475px;height:48px;line-height:47px;--dy:1px"><span class="nm" style="letter-spacing:-0.04px">Jubilant.VR</span><span class="em" style="letter-spacing:0.02px">Jubilant.VR@bdb.ai</span><span class="ty" style="letter-spacing:0.93px">Windows AD</span></div><span class="gi" style="left:1143.7px;top:487.5px"><svg class="ic" viewBox="0 0 24 24"><path d="M3 17.25V21h3.75L17.81 9.94l-3.75-3.75L3 17.25zM20.71 7.04c.39-.39.39-1.02 0-1.41l-2.34-2.34c-.39-.39-1.02-.39-1.41 0l-1.83 1.83 3.75 3.75 1.83-1.83z"/></svg></span><span class="gi" style="left:1193.9px;top:487.5px"><svg class="ic" viewBox="0 0 24 24"><path d="M12 2C6.48 2 2 6.48 2 12s4.48 10 10 10 10-4.480 10-10S17.52 2 12 2zM4 12c0-4.42 3.58-8 8-8 1.850 0 3.550.63 4.900 1.690L5.690 16.900C4.630 15.550 4 13.850 4 12zm8 8c-1.850 0-3.550-.63-4.900-1.690L18.310 7.100C19.370 8.450 20 10.150 20 12c0 4.420-3.580 8-8 8z"/></svg></span><span class="gi" style="left:1243.4px;top:487.5px"><svg class="ic" viewBox="0 0 24 24"><path d="M6 19c0 1.100.9 2 2 2h8c1.100 0 2-.9 2-2V7H6v12zM19 4h-3.500l-1-1h-5l-1 1H5v2h14V4z"/></svg></span>
<div class="row" style="top:523px;height:47px;line-height:46px;--dy:1px"><span class="nm" style="letter-spacing:0.60px">auth0|636b8aa300f9138b7...</span><span class="em"></span><span class="ty" style="letter-spacing:0.93px">Windows AD</span></div><span class="gi" style="left:1143.7px;top:535.0px"><svg class="ic" viewBox="0 0 24 24"><path d="M3 17.25V21h3.75L17.81 9.94l-3.75-3.75L3 17.25zM20.71 7.04c.39-.39.39-1.02 0-1.41l-2.34-2.34c-.39-.39-1.02-.39-1.41 0l-1.83 1.83 3.75 3.75 1.83-1.83z"/></svg></span><span class="gi" style="left:1193.9px;top:535.0px"><svg class="ic" viewBox="0 0 24 24"><path d="M12 2C6.48 2 2 6.48 2 12s4.48 10 10 10 10-4.480 10-10S17.52 2 12 2zM4 12c0-4.42 3.58-8 8-8 1.850 0 3.550.63 4.900 1.690L5.690 16.900C4.630 15.550 4 13.850 4 12zm8 8c-1.850 0-3.550-.63-4.900-1.690L18.310 7.100C19.370 8.450 20 10.150 20 12c0 4.420-3.580 8-8 8z"/></svg></span><span class="gi" style="left:1243.4px;top:535.0px"><svg class="ic" viewBox="0 0 24 24"><path d="M6 19c0 1.100.9 2 2 2h8c1.100 0 2-.9 2-2V7H6v12zM19 4h-3.500l-1-1h-5l-1 1H5v2h14V4z"/></svg></span>
<div class="row odd" style="top:570px;height:48px;line-height:47px;--dy:1px"></div><span class="gi" style="left:1143.7px;top:582.5px"><svg class="ic" viewBox="0 0 24 24"><path d="M3 17.25V21h3.75L17.81 9.94l-3.75-3.75L3 17.25zM20.71 7.04c.39-.39.39-1.02 0-1.41l-2.34-2.34c-.39-.39-1.02-.39-1.41 0l-1.83 1.83 3.75 3.75 1.83-1.83z"/></svg></span><span class="gi" style="left:1193.9px;top:582.5px"><svg class="ic" viewBox="0 0 24 24"><path d="M12 2C6.48 2 2 6.48 2 12s4.48 10 10 10 10-4.480 10-10S17.52 2 12 2zM4 12c0-4.42 3.58-8 8-8 1.850 0 3.550.63 4.900 1.690L5.690 16.900C4.630 15.550 4 13.850 4 12zm8 8c-1.850 0-3.550-.63-4.900-1.690L18.310 7.100C19.370 8.450 20 10.150 20 12c0 4.420-3.580 8-8 8z"/></svg></span><span class="gi" style="left:1243.4px;top:582.5px"><svg class="ic" viewBox="0 0 24 24"><path d="M6 19c0 1.100.9 2 2 2h8c1.100 0 2-.9 2-2V7H6v12zM19 4h-3.500l-1-1h-5l-1 1H5v2h14V4z"/></svg></span>
<div class="abs" style="right:0;top:0;width:7px;height:586px;background:#d0d0d0"></div>
<div class="abs" style="right:0;top:0;width:7px;height:241px;background:#999;border-radius:3.5px"></div>
</div>
<div class="foot" style="left:1600px;top:776px;width:301px">Showing 30 out of 30</div>

<div class="hl" style="left:1587px;top:93px;width:91px;height:62px"></div>
<div class="hl" style="left:597px;top:231px;width:1274px;height:42px"></div>
<svg width="1918" height="815" viewBox="0 0 1918 815" style="position:absolute;left:0;top:0;pointer-events:none"><path fill="#f5a70f" d="M623.00,233.20 Q608.44,226.85 593.89,217.51 A15.2,15.2 0 1 0 592.99,247.10 Q608.00,238.65 623.00,233.20Z"/><path fill="#f5a70f" d="M1612.50,95.20 Q1598.21,89.28 1583.92,80.36 A15.4,15.4 0 1 0 1584.01,110.22 Q1598.26,101.21 1612.50,95.20Z"/><text x="594" y="237.800" font-family="Liberation Sans, sans-serif" font-size="17" fill="#fff" text-anchor="middle">8</text><text x="1583.2" y="100.800" font-family="Liberation Sans, sans-serif" font-size="17" fill="#fff" text-anchor="middle">7</text></svg>
</body></html>
